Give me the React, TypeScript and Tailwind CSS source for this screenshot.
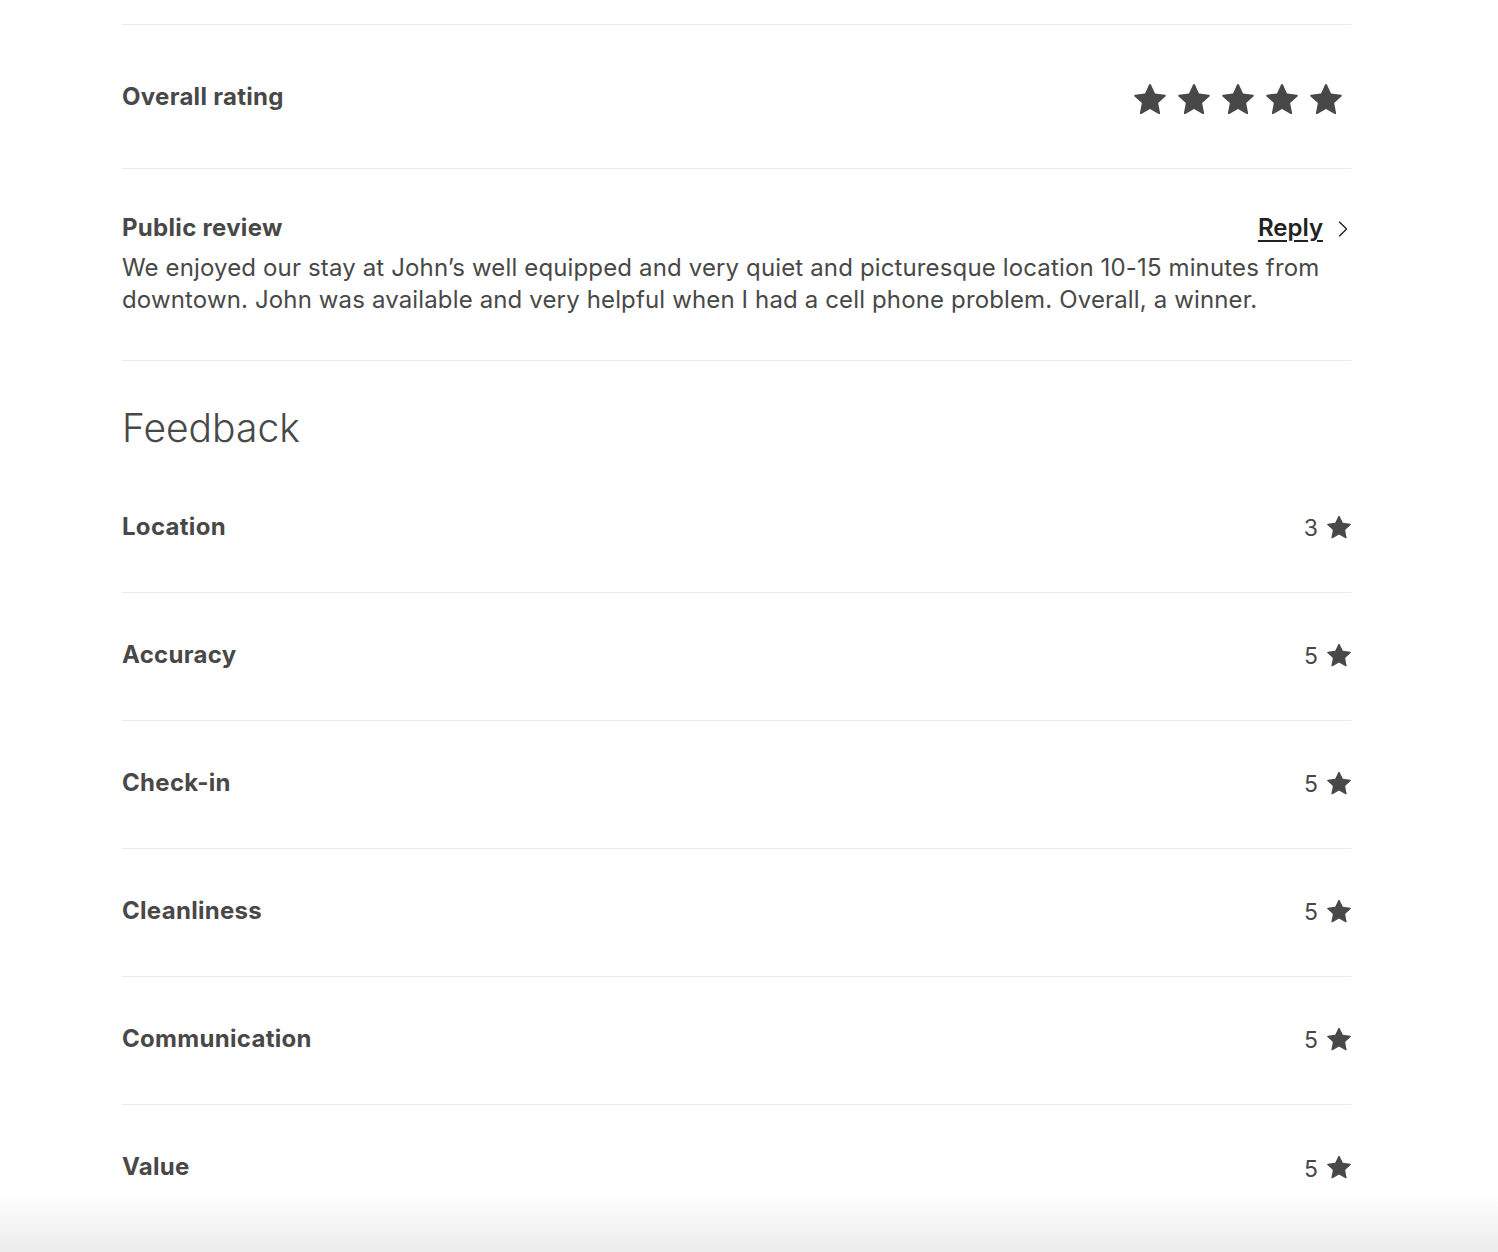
const Star = ({ className }: { className: string }) => (
  <svg viewBox="0 0 32 32" className={className} fill="currentColor" aria-hidden="true">
    <path d="M15.094 1.579l-4.124 8.885-9.86 1.27a1 1 0 0 0-.542 1.736l7.293 6.565-1.965 9.852a1 1 0 0 0 1.483 1.061L16 25.951l8.625 4.997a1 1 0 0 0 1.482-1.06l-1.965-9.853 7.293-6.565a1 1 0 0 0-.541-1.735l-9.86-1.271-4.127-8.885a1 1 0 0 0-1.814 0z" />
  </svg>
);

const feedback = [
  { label: "Location", score: 3 },
  { label: "Accuracy", score: 5 },
  { label: "Check-in", score: 5 },
  { label: "Cleanliness", score: 5 },
  { label: "Communication", score: 5 },
  { label: "Value", score: 5 },
];

export default function App() {
  return (
    <div
      className="relative h-[1252px] overflow-hidden bg-white text-[#484848]"
      style={{ fontFamily: "Inter, 'Noto Sans', sans-serif" }}
    >
      <div className="mx-[122px] pt-6 max-w-[1229px]">
        <div className="flex h-[145px] items-center justify-between border-y border-[#ebebeb]">
          <h2 className="text-[24px] font-bold tracking-[0.3px]">Overall rating</h2>
          <div className="mr-[9px] mt-1 flex gap-[12px]">
            {[0, 1, 2, 3, 4].map((i) => (
              <Star key={i} className="h-[32px] w-[32px]" />
            ))}
          </div>
        </div>

        <div className="border-b border-[#ebebeb] pt-[45px] pb-[44px]">
          <div className="flex items-center justify-between">
            <h2 className="text-[24px] leading-[28px] font-bold tracking-[0.3px]">Public review</h2>
            <a href="#" className="flex items-center gap-[10px] text-[24px] leading-[28px] font-semibold text-[#222] underline underline-offset-4">
              Reply
              <svg viewBox="0 0 32 32" className="mt-[2px] h-[18px] w-[18px]" fill="none" stroke="currentColor" strokeWidth="2.5">
                <path d="M11 3l12.3 12.3a1 1 0 0 1 0 1.4L11 29" />
              </svg>
            </a>
          </div>
          <p className="mt-[10px] text-[24px] leading-[32px] tracking-[0.14px]">
            We enjoyed our stay at John’s well equipped and very quiet and picturesque location 10-15 minutes from
            downtown. John was available and very helpful when I had a cell phone problem. Overall, a winner.
          </p>
        </div>

        <h1 className="pt-[43px] text-[39px] leading-[48px] font-light">Feedback</h1>

        <div className="mt-[13px]">
          {feedback.map((f) => (
            <div key={f.label} className="flex h-[128px] items-center justify-between border-b border-[#ebebeb] pb-1 last:border-b-0">
              <span className="text-[24px] font-bold tracking-[0.3px]">{f.label}</span>
              <span className="flex items-center gap-[9px] text-[23px]">
                <span className="pt-[4px]">{f.score}</span>
                <Star className="h-[24px] w-[24px]" />
              </span>
            </div>
          ))}
        </div>
      </div>

      <div className="pointer-events-none absolute inset-x-0 bottom-0 h-[60px] bg-gradient-to-b from-white/0 to-[#ececec]" />
    </div>
  );
}
